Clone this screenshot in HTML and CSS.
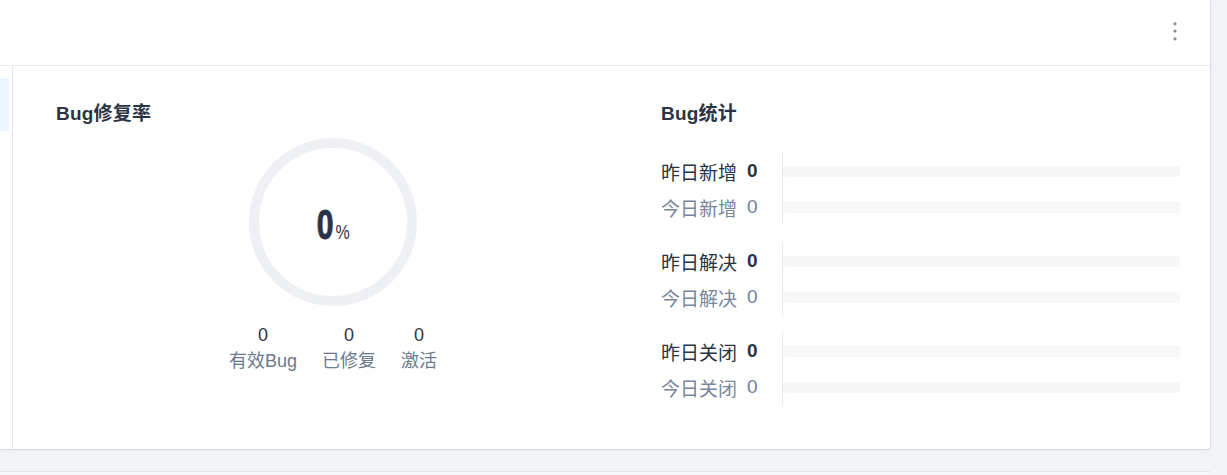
FILE: index.html
```html
<!DOCTYPE html>
<html lang="zh-CN">
<head>
<meta charset="utf-8">
<title>Bug</title>
<link rel="stylesheet" href="styles.css">
</head>
<body>
<div class="page">
  <section class="card">
    <header class="card-head">
      <button class="more" aria-label="更多">
        <svg width="4" height="19" viewBox="0 0 4 19"><circle cx="2" cy="1.8" r="1.6"/><circle cx="2" cy="9" r="1.6"/><circle cx="2" cy="16.8" r="1.6"/></svg>
      </button>
    </header>
    <div class="card-body">
      <aside class="side"><div class="side-item"></div></aside>
      <div class="panel rate">
        <h3 class="title">Bug修复率</h3>
        <div class="ring-wrap">
          <div class="ring"><span class="big">0</span><span class="pct">%</span></div>
        </div>
        <div class="counts">
          <div class="count"><span class="num">0</span><span class="lbl">有效Bug</span></div>
          <div class="count"><span class="num">0</span><span class="lbl">已修复</span></div>
          <div class="count"><span class="num">0</span><span class="lbl">激活</span></div>
        </div>
      </div>
      <div class="panel stat">
        <h3 class="title">Bug统计</h3>
        <div class="groups">
          <div class="group">
            <div class="labels">
              <div class="row strong">昨日新增<b>0</b></div>
              <div class="row weak">今日新增<span>0</span></div>
            </div>
            <div class="bars">
              <div class="row"><div class="bar"></div></div>
              <div class="row"><div class="bar"></div></div>
            </div>
          </div>
          <div class="group">
            <div class="labels">
              <div class="row strong">昨日解决<b>0</b></div>
              <div class="row weak">今日解决<span>0</span></div>
            </div>
            <div class="bars">
              <div class="row"><div class="bar"></div></div>
              <div class="row"><div class="bar"></div></div>
            </div>
          </div>
          <div class="group">
            <div class="labels">
              <div class="row strong">昨日关闭<b>0</b></div>
              <div class="row weak">今日关闭<span>0</span></div>
            </div>
            <div class="bars">
              <div class="row"><div class="bar"></div></div>
              <div class="row"><div class="bar"></div></div>
            </div>
          </div>
        </div>
      </div>
    </div>
  </section>
  <section class="card next"></section>
</div>
</body>
</html>
```
FILE: styles.css
```css
html, body {
  margin: 0;
  padding: 0;
}
body {
  background: #f2f3f7;
  font-family: "Liberation Sans", "Noto Sans CJK SC", sans-serif;
  color: #2d3646;
  overflow: hidden;
}
.page {
  width: 1210px;
  display: flex;
  flex-direction: column;
  gap: 22px;
}
.card {
  background: #fff;
  border-radius: 0 0 4px 0;
  box-shadow: 0 1px 2px rgba(40, 50, 70, 0.12), 1px 0 2px rgba(40, 50, 70, 0.08);
}
.card.next {
  height: 2px;
  border-radius: 0;
  background: #f8f9fb;
  border-top: 1px solid #e2e4e9;
  box-shadow: none;
}
.card-head {
  height: 66px;
  border-bottom: 1px solid #ebebf0;
  display: flex;
  justify-content: flex-end;
  align-items: flex-start;
  padding: 22px 33px 0 0;
  box-sizing: border-box;
}
.more {
  border: 0;
  background: none;
  padding: 0;
  margin: 0;
  width: 4px;
  height: 19px;
  display: block;
}
.more svg {
  display: block;
  fill: #858b97;
}
.card-body {
  height: 383px;
  display: flex;
}
.side {
  width: 12px;
  border-right: 1px solid #e6e8ed;
  padding-top: 12px;
}
.side-item {
  width: 9px;
  height: 53px;
  background: #edf5ff;
}
.panel {
  box-sizing: border-box;
  padding-top: 36px;
}
.rate {
  flex: 0 0 605px;
  padding-left: 43px;
  padding-right: 8px;
}
.stat {
  flex: 1;
  padding-left: 43px;
  padding-right: 30px;
}
.title {
  margin: 0;
  font-size: 19px;
  line-height: 24px;
  font-weight: 700;
  color: #2b3444;
  letter-spacing: 0.2px;
}
.ring-wrap {
  margin-top: 12px;
  display: flex;
  justify-content: center;
}
.ring {
  width: 168px;
  height: 168px;
  box-sizing: border-box;
  border: 10px solid #eff0f3;
  border-radius: 50%;
  display: flex;
  justify-content: center;
  align-items: baseline;
  padding-top: 52px;
  padding-right: 4px;
}
.big {
  display: inline-block;
  width: 18px;
  text-align: center;
  font-family: "Liberation Sans", sans-serif;
  font-weight: 700;
  font-size: 43px;
  line-height: 48px;
  color: #2b3447;
  -webkit-text-stroke: 1px #2b3447;
  transform: scaleX(0.7);
}
.pct {
  display: inline-block;
  width: 15px;
  text-align: center;
  font-family: "Liberation Sans", sans-serif;
  font-size: 20px;
  color: #2b3447;
  margin-left: 2px;
  transform: scaleX(0.8);
}
.counts {
  margin-top: 16px;
  display: flex;
  justify-content: center;
  gap: 25px;
}
.count {
  display: flex;
  flex-direction: column;
  align-items: center;
  font-size: 18px;
  line-height: 26px;
}
.num {
  color: #2d3646;
}
.lbl {
  color: #6c7a8f;
}
.groups {
  margin-top: 27px;
  display: flex;
  flex-direction: column;
  gap: 18px;
}
.group {
  display: flex;
}
.labels {
  width: 121px;
  flex: 0 0 121px;
}
.bars {
  flex: 1;
  border-left: 1px solid #e6e8ee;
}
.row {
  height: 36px;
  display: flex;
  align-items: center;
  font-size: 19px;
  white-space: pre;
}
.row.strong {
  color: #2a3343;
}
.row.strong b {
  font-weight: 700;
  margin-left: 10px;
}
.row.weak {
  color: #79859a;
}
.row.weak span {
  color: #6f7f98;
  margin-left: 10px;
}
.bar {
  width: 100%;
  height: 11px;
  border-radius: 3px;
  background: #f7f7f8;
}
```
